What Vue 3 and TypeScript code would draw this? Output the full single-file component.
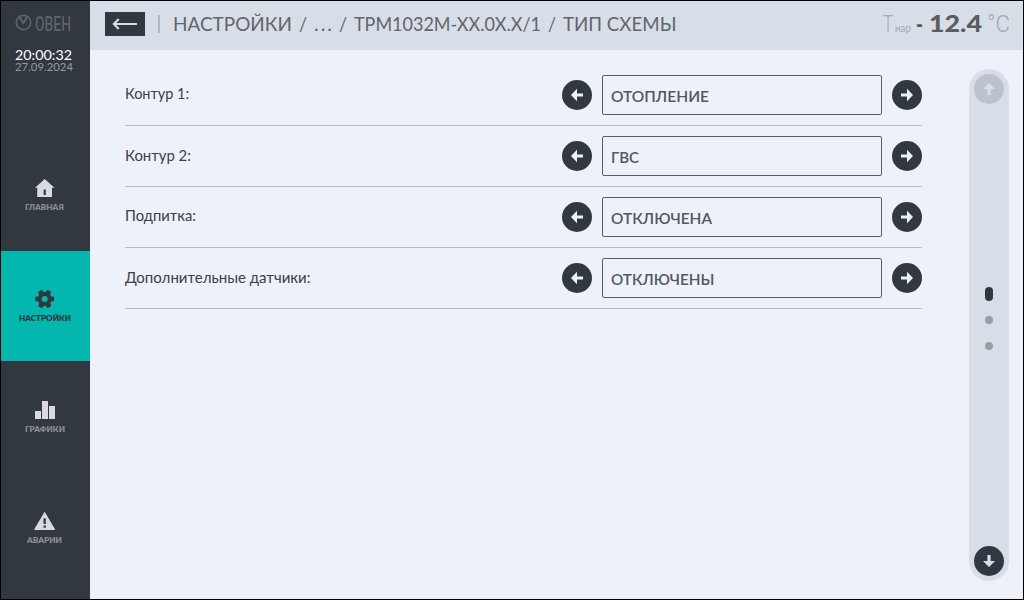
<script setup lang="ts">
import { h, ref } from 'vue'

interface FitProps {
  text: string
  w: number
  size: number
  adjust?: string
}

// One line of text set to a fixed width; weight, colour and family are inherited from CSS.
const FitText = (props: FitProps) =>
  h(
    'svg',
    {
      width: props.w,
      height: props.size,
      style: { display: 'block', overflow: 'visible', flex: 'none' },
    },
    [
      h(
        'text',
        {
          x: 0,
          y: props.size * 0.8,
          'font-size': props.size,
          fill: 'currentColor',
          textLength: props.w,
          lengthAdjust: props.adjust ?? 'spacingAndGlyphs',
        },
        props.text,
      ),
    ],
  )
FitText.props = ['text', 'w', 'size', 'adjust']

const nav = [
  { id: 'home', label: 'ГЛАВНАЯ', w: 39 },
  { id: 'settings', label: 'НАСТРОЙКИ', w: 52 },
  { id: 'charts', label: 'ГРАФИКИ', w: 40 },
  { id: 'alarms', label: 'АВАРИИ', w: 35 },
]
const active = ref('settings')

const crumbs = [
  { text: 'НАСТРОЙКИ', w: 119 },
  { text: '/', w: 8 },
  { text: '...', w: 18, adjust: 'spacing' },
  { text: '/', w: 8 },
  { text: 'ТРМ1032М-ХХ.0Х.Х/1', w: 187 },
  { text: '/', w: 8 },
  { text: 'ТИП СХЕМЫ', w: 113.5 },
]

const rows = [
  { label: 'Контур 1:', lw: 64, value: 'ОТОПЛЕНИЕ', vw: 98, shift: 0 },
  { label: 'Контур 2:', lw: 66, value: 'ГВС', vw: 28, shift: 1 },
  { label: 'Подпитка:', lw: 71, value: 'ОТКЛЮЧЕНА', vw: 101, shift: 0 },
  { label: 'Дополнительные датчики:', lw: 185.5, value: 'ОТКЛЮЧЕНЫ', vw: 103.5, shift: 1 },
]
</script>

<template>
  <div class="screen">
    <aside class="sidebar">
      <div class="brand">
        <div class="logo">
          <svg width="17" height="17" viewBox="0 0 17 17" fill="none" stroke="currentColor">
            <circle cx="8.5" cy="8.5" r="7.2" stroke-width="1.7" />
            <path d="M4.6 3.4 8.3 8.8 12.2 2.8" stroke-width="2.2" />
          </svg>
          <FitText class="logo-name" text="ОВЕН" :w="36" :size="21" />
        </div>
        <FitText class="time" text="20:00:32" :w="57" :size="14" />
        <FitText class="date" text="27.09.2024" :w="58" :size="10.5" />
      </div>
      <nav class="nav">
        <button
          v-for="item in nav"
          :key="item.id"
          class="nav-item"
          :class="{ active: item.id === active }"
          @click="active = item.id"
        >
          <svg class="nav-icon" width="22" height="20" viewBox="0 0 22 20" fill="currentColor">
            <path
              v-if="item.id === 'home'"
              fill-rule="evenodd"
              d="M10.7 1 20.5 9.8H18V19H3.2V9.8H1ZM9.6 11.5V17H11.8V11.5Z"
            />
            <g v-else-if="item.id === 'settings'" fill="none" stroke="currentColor">
              <circle cx="10.7" cy="10" r="5" stroke-width="4" />
              <path
                v-for="a in [30, 90, 150, 210, 270, 330]"
                :key="a"
                d="M9.2 1.4H12.2L12.7 5H8.7Z"
                fill="currentColor"
                stroke-width="1.6"
                stroke-linejoin="round"
                :transform="`rotate(${a} 10.7 10)`"
              />
            </g>
            <path v-else-if="item.id === 'charts'" d="M1 11h6v8H1ZM8 1h6v18H8ZM15 6h6v13h-6Z" />
            <path
              v-else
              fill-rule="evenodd"
              d="M10.3 1.2Q10.6.8 11 1.2L21 18.3Q21 19 20.5 19H.7Q0 19 .3 18.3ZM9.5 7.2V13H11.8V7.2ZM9.5 14.6V16.7H11.8V14.6Z"
            />
          </svg>
          <FitText class="nav-label" :text="item.label" :w="item.w" :size="7.6" />
        </button>
      </nav>
    </aside>

    <main class="main">
      <header class="header">
        <button class="back">
          <svg width="26" height="12" viewBox="0 0 26 12" fill="none" stroke="currentColor" stroke-width="2">
            <path d="M25 6H2M6.8 1 1.8 6 6.8 11" />
          </svg>
        </button>
        <span class="divider"></span>
        <div class="crumbs">
          <FitText v-for="(c, i) in crumbs" :key="i" :text="c.text" :w="c.w" :size="20" :adjust="c.adjust" />
        </div>
        <div class="temp">
          <FitText class="temp-t" text="T" :w="10" :size="24" />
          <FitText class="temp-sub" text="нар" :w="16" :size="11" />
          <FitText class="temp-minus" text="-" :w="7" :size="24" />
          <FitText class="temp-value" text="12.4" :w="53" :size="23.5" />
          <FitText class="temp-unit" text="°C" :w="23" :size="24" />
        </div>
      </header>

      <div class="body">
        <section class="rows">
          <div v-for="row in rows" :key="row.label" class="row">
            <FitText class="row-label" :class="{ low: row.shift }" :text="row.label" :w="row.lw" :size="16" />
            <div class="picker">
              <button class="round">
                <svg width="14" height="14" viewBox="0 0 14 14" fill="currentColor">
                  <path d="M1 7 7 .8V5.4H13V8.6H7V13.2Z" />
                </svg>
              </button>
              <div class="field">
                <FitText :text="row.value" :w="row.vw" :size="16" />
              </div>
              <button class="round">
                <svg width="14" height="14" viewBox="0 0 14 14" fill="currentColor">
                  <path d="M13 7 7 .8V5.4H1V8.6H7V13.2Z" />
                </svg>
              </button>
            </div>
          </div>
        </section>

        <div class="scroller">
          <button class="round disabled">
            <svg width="14" height="14" viewBox="0 0 14 14" fill="currentColor">
              <path d="M7 1 13 7H8.6V13H5.4V7H1Z" />
            </svg>
          </button>
          <div class="dots">
            <span class="dot current"></span>
            <span class="dot"></span>
            <span class="dot"></span>
          </div>
          <button class="round">
            <svg width="14" height="14" viewBox="0 0 14 14" fill="currentColor">
              <path d="M7 13 13 7H8.6V1H5.4V7H1Z" />
            </svg>
          </button>
        </div>
      </div>
    </main>
  </div>
</template>

<style>
body {
  margin: 0;
}
</style>

<style scoped>
.screen {
  display: flex;
  box-sizing: border-box;
  width: 1024px;
  height: 600px;
  border: 1px solid #000;
  overflow: hidden;
  background: #eef1fa;
  font-family: Lato, 'Open Sans', sans-serif;
}
button {
  margin: 0;
  padding: 0;
  border: 0;
  font-family: inherit;
}
.sidebar {
  flex: none;
  width: 89px;
  background: #323840;
}
.brand {
  box-sizing: border-box;
  height: 139px;
  padding: 13px 0 0 14px;
}
.logo {
  display: flex;
  gap: 3px;
  height: 35px;
  color: #5d6168;
}
.logo > svg:first-child {
  flex: none;
}
.logo-name {
  font-family: Roboto, sans-serif;
  font-weight: 500;
}
.time {
  color: #fff;
}
.date {
  color: #9599a0;
}
.nav {
  display: flex;
  flex-direction: column;
  gap: 1px;
}
.nav-item {
  display: flex;
  flex-direction: column;
  align-items: center;
  box-sizing: border-box;
  height: 110px;
  padding-top: 38px;
  background: transparent;
  color: #d8dae0;
}
.nav-item.active {
  background: #03b6ae;
  color: #323840;
}
.nav-icon {
  display: block;
  margin-right: 1px;
}
.nav-label {
  margin-top: 6px;
  margin-right: 2px;
  color: #8a8d94;
  font-weight: 800;
}
.active .nav-label {
  color: #323840;
}
.main {
  flex: 1;
}
.header {
  display: flex;
  align-items: center;
  box-sizing: border-box;
  height: 49px;
  padding: 0 13px 3px 15px;
  background: #d8dee8;
}
.back {
  display: flex;
  align-items: center;
  justify-content: center;
  width: 40px;
  height: 24px;
  background: #323840;
  color: #d8dee8;
}
.divider {
  width: 2px;
  height: 18px;
  margin: 0 13px;
  background: #b5b7bb;
}
.crumbs {
  display: flex;
  gap: 7px;
  margin-top: 2px;
  color: #62656a;
}
.temp {
  display: flex;
  align-items: flex-start;
  height: 24px;
  margin-left: auto;
  color: #a4a8b2;
}
.temp-t,
.temp-unit {
  margin-top: 1px;
  font-family: Roboto, sans-serif;
  font-weight: 300;
}
.temp-sub {
  margin-top: 11px;
  margin-left: 2px;
}
.temp-minus {
  margin-top: 2px;
  margin-left: 5px;
  color: #595c61;
  font-weight: 900;
}
.temp-value {
  margin: 1px 5px 0 6px;
  color: #595c61;
  font-weight: 900;
}
.body {
  display: flex;
  justify-content: space-between;
  padding: 15px 14px 0 35px;
}
.rows {
  width: 797px;
}
.row {
  display: flex;
  align-items: flex-start;
  justify-content: space-between;
  box-sizing: border-box;
  height: 61px;
  padding-top: 10px;
  border-bottom: 1px solid #b9bfca;
}
.row-label {
  margin-top: 11px;
  color: #3b3e43;
}
.row-label.low {
  margin-top: 12px;
}
.picker {
  display: flex;
  align-items: center;
  gap: 10px;
}
.round {
  display: flex;
  align-items: center;
  justify-content: center;
  flex: none;
  width: 30px;
  height: 30px;
  border-radius: 50%;
  background: #323840;
  color: #eef1fa;
}
.field {
  display: flex;
  align-items: center;
  box-sizing: border-box;
  width: 280px;
  height: 40px;
  padding: 3px 8px 0;
  border: 1px solid #5a5e66;
  border-radius: 2px;
  color: #54575b;
  font-weight: 600;
}
.scroller {
  display: flex;
  flex-direction: column;
  align-items: center;
  justify-content: space-between;
  box-sizing: border-box;
  width: 40px;
  height: 512px;
  margin-top: 4px;
  padding: 5px;
  border-radius: 20px;
  background: #d8dee8;
}
.scroller .round {
  color: #d8dee8;
}
.scroller .round.disabled {
  background: #bcc2ce;
}
.dots {
  display: flex;
  flex-direction: column;
  align-items: center;
  gap: 18px;
  margin-bottom: 13px;
}
.dot {
  width: 8px;
  height: 8px;
  border-radius: 4px;
  background: #9a9da2;
}
.dot.current {
  height: 14px;
  margin-bottom: -3px;
  background: #323840;
}
</style>
